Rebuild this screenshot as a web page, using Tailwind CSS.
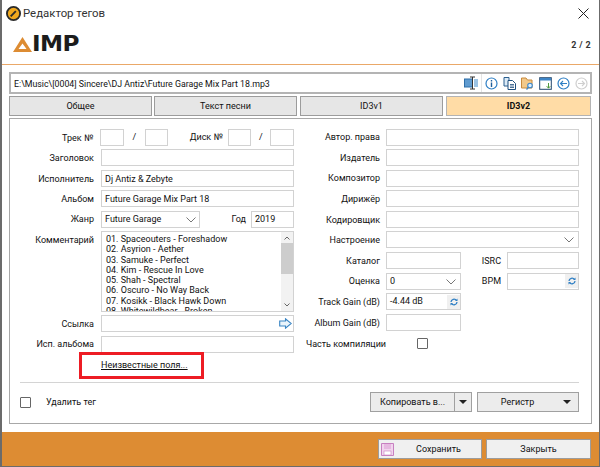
<!DOCTYPE html>
<html lang="ru">
<head>
  <meta charset="UTF-8">
  <title>Редактор тегов</title>
  <script src="https://cdn.jsdelivr.net/npm/@tailwindcss/browser@4"></script>
</head>
<body class="w-[600px] h-[467px] overflow-hidden bg-white font-['Roboto',sans-serif] text-[9px] leading-none text-[#111]">
  <div class="relative w-[600px] h-[467px] flex flex-col border-l-2 border-r border-[#6b6b6b]">

    <!-- title bar -->
    <div class="h-[27px] flex items-center pl-[2px] pr-[10px] shrink-0">
      <svg class="w-[15px] h-[15px] ml-[2px]" viewBox="0 0 16 16"><circle cx="8" cy="8" r="7" fill="#f0a81e" stroke="#2a2a2a" stroke-width="2"/><path d="M5 11 L10.5 5.5" stroke="#2a2a2a" stroke-width="2"/></svg>
      <span class="ml-[2px] text-[11.4px] text-[#333]">Редактор тегов</span>
      <svg class="ml-auto w-[11px] h-[11px]" viewBox="0 0 11 11"><path d="M0.5 0.5 L10.5 10.5 M10.5 0.5 L0.5 10.5" stroke="#222" stroke-width="1"/></svg>
    </div>

    <!-- logo -->
    <div class="h-[27px] flex items-start pt-[10px] pl-[11px] pr-[8px] shrink-0 border-b-[1.5px] border-[#eaa868] box-content">
      <svg class="w-[19px] h-[15px]" viewBox="0 0 19 15"><path fill-rule="evenodd" d="M9.5 0 L19 15 H0 Z M9.5 6.5 L5.5 12 H13.5 Z" fill="#dd8c33"/></svg>
      <span class="font-['DejaVu_Sans',sans-serif] font-bold text-[20.5px] leading-[15px] tracking-[-0.5px] text-[#1c1c1c] scale-x-[1.13] origin-left">IMP</span>
      <span class="ml-auto font-bold text-[9px] text-[#333] mt-[4px] tracking-[0.3px]">2 / 2</span>
    </div>

    <!-- path box -->
    <div class="mt-[7px] mx-[7px] h-[22px] flex items-center border-2 border-[#b4b4b4] shrink-0">
      <div class="w-[471px] h-[18px] flex items-center pl-[3px] pr-[2px] border-r border-[#e4e4e4]">
        <span class="flex-1 text-[8.8px] pt-[2px]">E:\Music\[0004] Sincere\DJ Antiz\Future Garage Mix Part 18.mp3</span>
        <svg class="w-[15px] h-[14px]" viewBox="0 0 15 14"><rect x="0.5" y="3" width="8" height="8" fill="#5f9bd0" stroke="#2f6fa8"/><rect x="10" y="3" width="4" height="8" fill="#9cc3e4"/><path d="M6 1 H11 M8.5 1 V13 M6 13 H11" stroke="#333" fill="none"/></svg>
      </div>
      <div class="flex items-center gap-[5px] ml-[3px]">
        <svg class="w-[13px] h-[13px]" viewBox="0 0 13 13"><circle cx="6.5" cy="6.5" r="5.5" fill="none" stroke="#2f7fc4" stroke-width="1.2"/><path d="M6.5 3 V4.5 M6.5 5.5 V10" stroke="#1f5f9c" stroke-width="1.4"/></svg>
        <svg class="w-[13px] h-[13px]" viewBox="0 0 13 13"><path d="M1 0.5 H6 V9 H1 Z" fill="#dcebf7" stroke="#2b5f8f"/><path d="M5 3.5 H9.5 L12.5 6.5 V12.5 H5 Z" fill="#fff" stroke="#1f4f7f"/><path d="M7 7.5 H11 M7 9 H11 M7 10.5 H11" stroke="#1f4f7f" stroke-width="0.8"/></svg>
        <svg class="w-[13px] h-[13px]" viewBox="0 0 13 13"><path d="M0.5 1 H5 L6.5 3 H11 V11 H0.5 Z" fill="#f2c98a" stroke="#c88a3c"/><circle cx="9" cy="8.5" r="2.3" fill="#dcefff" stroke="#3f88c8" stroke-width="1.1"/><path d="M7.5 10.3 L5.5 12.5" stroke="#3f88c8" stroke-width="1.3"/></svg>
        <svg class="w-[13px] h-[13px]" viewBox="0 0 13 13"><rect x="0.7" y="0.7" width="11.6" height="11.6" fill="#fff" stroke="#24486e" stroke-width="1"/><rect x="1" y="1" width="11" height="2.5" fill="#3d84c6"/><path d="M9.5 6 V11 M7.7 9.2 L9.5 11.2 L11.3 9.2" stroke="#4f9a3c" fill="none"/></svg>
        <svg class="w-[13px] h-[13px]" viewBox="0 0 13 13"><circle cx="6.5" cy="6.5" r="5.5" fill="none" stroke="#2f7fc4" stroke-width="1.2"/><path d="M10 6.5 H3.5 M6 4 L3.5 6.5 L6 9" stroke="#2f7fc4" stroke-width="1.1" fill="none"/></svg>
        <svg class="w-[13px] h-[13px]" viewBox="0 0 13 13"><circle cx="6.5" cy="6.5" r="5.5" fill="none" stroke="#cfcfcf" stroke-width="1.2"/><path d="M3 6.5 H9.5 M7 4 L9.5 6.5 L7 9" stroke="#cfcfcf" stroke-width="1.1" fill="none"/></svg>
      </div>
    </div>

    <!-- tabs -->
    <div class="mt-[2px] mx-[7px] h-[20px] flex gap-[2px] shrink-0">
      <div class="w-[143px] flex items-center justify-center bg-[#e6e6e6] border-[1.5px] border-[#9c9c9c]">Общее</div>
      <div class="w-[143px] flex items-center justify-center bg-[#e6e6e6] border-[1.5px] border-[#9c9c9c]">Текст песни</div>
      <div class="w-[143px] ml-[1px] flex items-center justify-center bg-[#e6e6e6] border-[1.5px] border-[#9c9c9c]">ID3v1</div>
      <div class="w-[145px] ml-[1px] flex items-center justify-center bg-[#ffdca6] border-[1.5px] border-[#b4b4b4] font-bold">ID3v2</div>
    </div>

    <!-- main panel -->
    <div class="relative mt-[2px] mx-[7px] h-[306px] border-[1.5px] border-[#a8a8a8] pl-[11px] pr-[12px] pt-[10px] shrink-0">
      <div class="flex h-[246px]">
        <!-- left column -->
        <div class="w-[273px] flex flex-col gap-[3.4px] [&>div>span:first-child]:pt-[1.5px]">
          <div class="flex items-center h-[17px]">
            <span class="w-[73px] text-right">Трек №</span>
            <span class="w-[24px] h-[17px] ml-[7px] border-[1.5px] border-[#d2d2d2]"></span>
            <span class="w-[21px] text-center">/</span>
            <span class="w-[24px] h-[17px] border-[1.5px] border-[#d2d2d2]"></span>
            <span class="w-[55px] text-right">Диск №</span>
            <span class="w-[24px] h-[17px] ml-[5px] border-[1.5px] border-[#d2d2d2]"></span>
            <span class="w-[19px] text-center">/</span>
            <span class="w-[24px] h-[17px] border-[1.5px] border-[#d2d2d2]"></span>
          </div>
          <div class="flex items-center h-[17px]">
            <span class="w-[73px] text-right">Заголовок</span>
            <span class="flex-1 h-[17px] ml-[7px] border-[1.5px] border-[#d2d2d2]"></span>
          </div>
          <div class="flex items-center h-[17px]">
            <span class="w-[73px] text-right">Исполнитель</span>
            <span class="flex-1 h-[17px] ml-[7px] pl-[3px] pt-[1.5px] flex items-center border-[1.5px] border-[#d2d2d2]">Dj Antiz &amp; Zebyte</span>
          </div>
          <div class="flex items-center h-[17px]">
            <span class="w-[73px] text-right">Альбом</span>
            <span class="flex-1 h-[17px] ml-[7px] pl-[3px] pt-[1.5px] flex items-center border-[1.5px] border-[#d2d2d2]">Future Garage Mix Part 18</span>
          </div>
          <div class="flex items-center h-[17px]">
            <span class="w-[73px] text-right">Жанр</span>
            <span class="w-[99px] h-[17px] ml-[7px] pl-[3px] pt-[1.5px] flex items-center justify-between border-[1.5px] border-[#d2d2d2]">Future Garage
              <svg class="w-[10px] h-[6px] mr-[3px]" viewBox="0 0 10 6"><path d="M0.5 0.5 L5 5 L9.5 0.5" fill="none" stroke="#777"/></svg>
            </span>
            <span class="w-[51px] pr-[5px] pt-[1.5px] text-right">Год</span>
            <span class="flex-1 h-[17px] pl-[3px] pt-[1.5px] flex items-center border-[1.5px] border-[#d2d2d2]">2019</span>
          </div>
          <div class="flex h-[81px]">
            <span class="w-[73px] text-right mt-[4px]">Комментарий</span>
            <div class="flex-1 ml-[7px] flex border-[1.5px] border-[#d2d2d2] overflow-hidden">
              <div class="flex-1 pl-[4px] pt-[2px] overflow-hidden leading-[10.3px]">
                <div>01. Spaceouters - Foreshadow</div>
                <div>02. Asyrion - Aether</div>
                <div>03. Samuke - Perfect</div>
                <div>04. Kim - Rescue In Love</div>
                <div>05. Shah - Spectral</div>
                <div>06. Oscuro - No Way Back</div>
                <div>07. Kosikk - Black Hawk Down</div>
                <div>08. Whitewildbear - Broken</div>
              </div>
              <div class="w-[12px] bg-[#f2f2f2] flex flex-col items-center justify-between py-[4px] relative">
                <svg class="w-[6px] h-[4px]" viewBox="0 0 6 4"><path d="M0.5 3.5 L3 1 L5.5 3.5" fill="none" stroke="#666"/></svg>
                <div class="absolute top-[11px] left-0 w-[12px] h-[31px] bg-[#cdcdcd]"></div>
                <svg class="w-[6px] h-[4px]" viewBox="0 0 6 4"><path d="M0.5 0.5 L3 3 L5.5 0.5" fill="none" stroke="#666"/></svg>
              </div>
            </div>
          </div>
          <div class="flex items-center h-[17px]">
            <span class="w-[73px] text-right">Ссылка</span>
            <span class="flex-1 h-[17px] ml-[7px] pr-[1px] flex items-center justify-end border-[1.5px] border-[#d2d2d2]">
              <svg class="w-[13px] h-[11px]" viewBox="0 0 13 11"><path d="M0.7 3 H6.5 V0.8 L12.2 5.5 L6.5 10.2 V8 H0.7 Z" fill="#eaf4fb" stroke="#3a85c4" stroke-width="1.1"/></svg>
            </span>
          </div>
          <div class="flex items-center h-[17px]">
            <span class="w-[73px] text-right">Исп. альбома</span>
            <span class="flex-1 h-[17px] ml-[7px] border-[1.5px] border-[#d2d2d2]"></span>
          </div>
          <div class="pl-[80px] mt-[4.5px]"><span class="underline">Неизвестные поля...</span></div>
        </div>

        <!-- right column -->
        <div class="flex-1 ml-[12px] -mt-[0.5px] flex flex-col gap-[3.6px] [&>div>span:first-child]:pt-[1.5px]">
          <div class="flex items-center h-[17px]"><span class="w-[74px] text-right">Автор. права</span><span class="flex-1 h-[17px] ml-[6px] border-[1.5px] border-[#d2d2d2]"></span></div>
          <div class="flex items-center h-[17px]"><span class="w-[74px] text-right">Издатель</span><span class="flex-1 h-[17px] ml-[6px] border-[1.5px] border-[#d2d2d2]"></span></div>
          <div class="flex items-center h-[17px]"><span class="w-[74px] text-right">Композитор</span><span class="flex-1 h-[17px] ml-[6px] border-[1.5px] border-[#d2d2d2]"></span></div>
          <div class="flex items-center h-[17px]"><span class="w-[74px] text-right">Дирижёр</span><span class="flex-1 h-[17px] ml-[6px] border-[1.5px] border-[#d2d2d2]"></span></div>
          <div class="flex items-center h-[17px]"><span class="w-[74px] text-right">Кодировщик</span><span class="flex-1 h-[17px] ml-[6px] border-[1.5px] border-[#d2d2d2]"></span></div>
          <div class="flex items-center h-[17px]">
            <span class="w-[74px] text-right">Настроение</span>
            <span class="flex-1 h-[17px] ml-[6px] flex items-center justify-end pr-[4px] border-[1.5px] border-[#d2d2d2]">
              <svg class="w-[10px] h-[6px]" viewBox="0 0 10 6"><path d="M0.5 0.5 L5 5 L9.5 0.5" fill="none" stroke="#777"/></svg>
            </span>
          </div>
          <div class="flex items-center h-[17px]">
            <span class="w-[74px] text-right">Каталог</span>
            <span class="w-[75px] h-[17px] ml-[6px] border-[1.5px] border-[#d2d2d2]"></span>
            <span class="w-[40px] pt-[1.5px] text-right">ISRC</span>
            <span class="flex-1 h-[17px] ml-[6px] border-[1.5px] border-[#d2d2d2]"></span>
          </div>
          <div class="flex items-center h-[17px]">
            <span class="w-[74px] text-right">Оценка</span>
            <span class="w-[75px] h-[17px] ml-[6px] pl-[3px] flex items-center justify-between pr-[4px] pt-[1.5px] border-[1.5px] border-[#d2d2d2]">0
              <svg class="w-[10px] h-[6px]" viewBox="0 0 10 6"><path d="M0.5 0.5 L5 5 L9.5 0.5" fill="none" stroke="#777"/></svg>
            </span>
            <span class="w-[40px] pt-[1.5px] text-right">BPM</span>
            <span class="flex-1 h-[17px] ml-[6px] flex items-center justify-end border-[1.5px] border-[#d2d2d2]">
              <span class="w-[13px] h-[14px] bg-[#f0f0f0] flex items-center justify-center">
                <svg class="w-[8px] h-[8px]" viewBox="0 0 8 8"><path d="M1 4 A3 3 0 0 1 6.5 2.5 M7 4 A3 3 0 0 1 1.5 5.5" fill="none" stroke="#2f7fc4" stroke-width="1.3"/><path d="M5 3 L7.5 3 L7.5 0.5 Z M3 5 L0.5 5 L0.5 7.5 Z" fill="#2f7fc4"/></svg>
              </span>
            </span>
          </div>
          <div class="flex items-center h-[17px]">
            <span class="w-[74px] text-right whitespace-nowrap">Track Gain (dB)</span>
            <span class="w-[75px] h-[17px] ml-[6px] pl-[3px] flex items-center justify-between border-[1.5px] border-[#d2d2d2]">-4.44 dB
              <span class="w-[13px] h-[14px] bg-[#f0f0f0] flex items-center justify-center">
                <svg class="w-[8px] h-[8px]" viewBox="0 0 8 8"><path d="M1 4 A3 3 0 0 1 6.5 2.5 M7 4 A3 3 0 0 1 1.5 5.5" fill="none" stroke="#2f7fc4" stroke-width="1.3"/><path d="M5 3 L7.5 3 L7.5 0.5 Z M3 5 L0.5 5 L0.5 7.5 Z" fill="#2f7fc4"/></svg>
              </span>
            </span>
          </div>
          <div class="flex items-center h-[17px]">
            <span class="w-[74px] text-right whitespace-nowrap">Album Gain (dB)</span>
            <span class="w-[75px] h-[17px] ml-[6px] border-[1.5px] border-[#d2d2d2]"></span>
          </div>
          <div class="flex items-center h-[17px] mt-[1px]">
            <span class="w-[111px] whitespace-nowrap">Часть компиляции</span>
            <span class="w-[11px] h-[11px] border-[1.5px] border-[#666] rounded-[1px]"></span>
          </div>
        </div>
      </div>

      <!-- divider and bottom row -->
      <div class="border-t-[1.5px] border-[#d4d4d4] mt-[7px] -ml-[1px]"></div>
      <div class="flex items-center h-[20px] mt-[9px] -ml-[1px]">
        <span class="w-[11px] h-[11px] border-[1.5px] border-[#666] rounded-[1px]"></span>
        <span class="ml-[15px]">Удалить тег</span>
        <div class="ml-auto flex gap-[5px]">
          <div class="w-[102px] h-[20px] flex items-center bg-[#ececec] border-[1.5px] border-[#a0a0a0]">
            <span class="flex-1 text-center pt-[1px]">Копировать в...</span>
            <span class="w-[17px] h-full flex items-center justify-center border-l border-[#a0a0a0]"><span class="w-0 h-0 border-x-[4px] border-x-transparent border-t-[4px] border-t-[#222]"></span></span>
          </div>
          <div class="w-[102px] h-[20px] flex items-center bg-[#ececec] border-[1.5px] border-[#a0a0a0] relative">
            <span class="flex-1 text-center pr-[6px] pt-[1px]">Регистр</span>
            <span class="w-0 h-0 mr-[7px] border-x-[4px] border-x-transparent border-t-[4px] border-t-[#222]"></span>
          </div>
        </div>
      </div>

      <!-- annotation frame -->
      <div class="absolute left-[68.5px] top-[232.5px] w-[125px] h-[27px] border-[3px] border-[#ed1c24]"></div>
    </div>

    <!-- footer -->
    <div class="mt-[8px] flex-1 bg-[#dd8c33] flex items-start justify-end gap-[4px] pt-[7px] pr-[8px] border-b border-[#6b6b6b]">
      <div class="w-[104px] h-[20px] flex items-center bg-[#f0f0f0] border-[1.5px] border-[#9c9c9c]">
        <svg class="w-[13px] h-[13px] ml-[2px]" viewBox="0 0 13 13"><path d="M0.5 0.5 H12.5 V12.5 H0.5 Z" fill="#f2d5ee" stroke="#c77fc0"/><rect x="3" y="1" width="7" height="5" fill="#e6b8e0"/><rect x="3" y="8" width="7" height="4" fill="#fff" stroke="#c77fc0" stroke-width="0.6"/></svg>
        <span class="flex-1 text-center pl-[2px] pt-[1px]">Сохранить</span>
      </div>
      <div class="w-[105px] h-[20px] flex items-center justify-center bg-[#f0f0f0] border-[1.5px] border-[#9c9c9c] pt-[1px]">Закрыть</div>
    </div>
  </div>
</body>
</html>
